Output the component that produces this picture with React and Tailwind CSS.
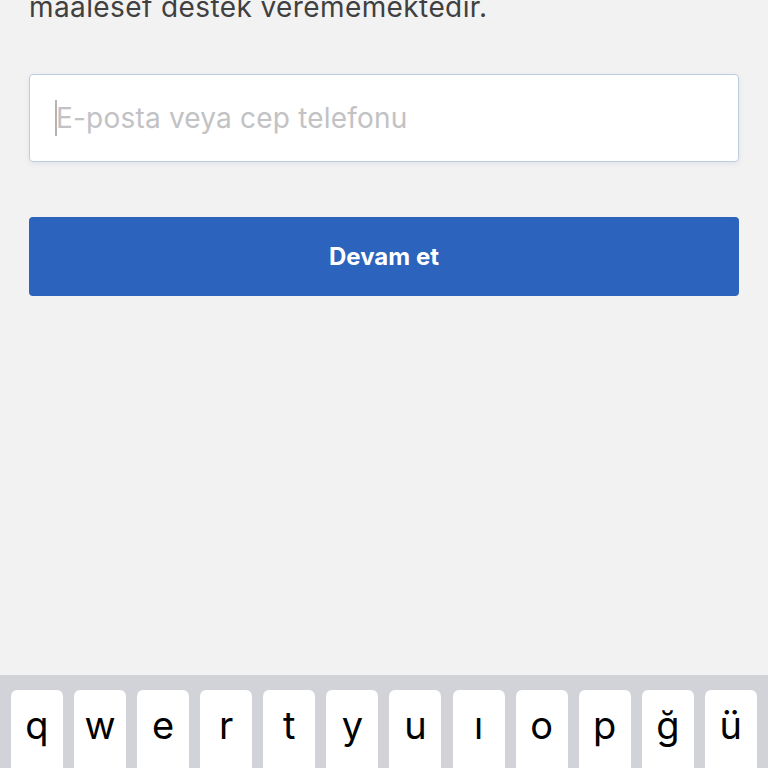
import React from "react";

const keys = ["q", "w", "e", "r", "t", "y", "u", "ı", "o", "p", "ğ", "ü"];

export default function App() {
  return (
    <div
      className="w-[768px] h-[768px] overflow-hidden bg-[#f2f2f2] flex flex-col"
      style={{ fontFamily: "Inter, 'Noto Sans', sans-serif" }}
    >
      <div className="px-[29px]">
        <p className="-mt-[11px] text-[28px] leading-[36px] text-[#404040] tracking-[0.4px]">
          maalesef destek verememektedir.
        </p>
        <div className="mt-[49px] h-[88px] bg-white border border-[#bccde3] rounded-[4px] shadow-[0_2px_6px_rgba(40,70,120,0.08)] flex items-center pl-[25px]">
          <span className="inline-block w-[2px] h-[36px] bg-[#b4b4b4] -mr-[1px]"></span>
          <span className="text-[28px] text-[#c2c2c4] leading-[36px] tracking-[0.2px]">
            E-posta veya cep telefonu
          </span>
        </div>
        <button className="mt-[55px] w-full h-[79px] bg-[#2b63bd] rounded-[4px] flex items-center justify-center text-white text-[24px] font-bold">
          Devam et
        </button>
      </div>
      <div className="mt-auto h-[93px] bg-[#d1d3d9] pt-[15px] px-[11px] flex justify-between">
        {keys.map((k) => (
          <div
            key={k}
            className="w-[52px] h-[86px] bg-white rounded-[6px] shadow-[0_1px_0_rgba(0,0,0,0.3)] flex justify-center pt-[12px] text-[38px] leading-[46px] text-black"
          >
            {k}
          </div>
        ))}
      </div>
    </div>
  );
}
